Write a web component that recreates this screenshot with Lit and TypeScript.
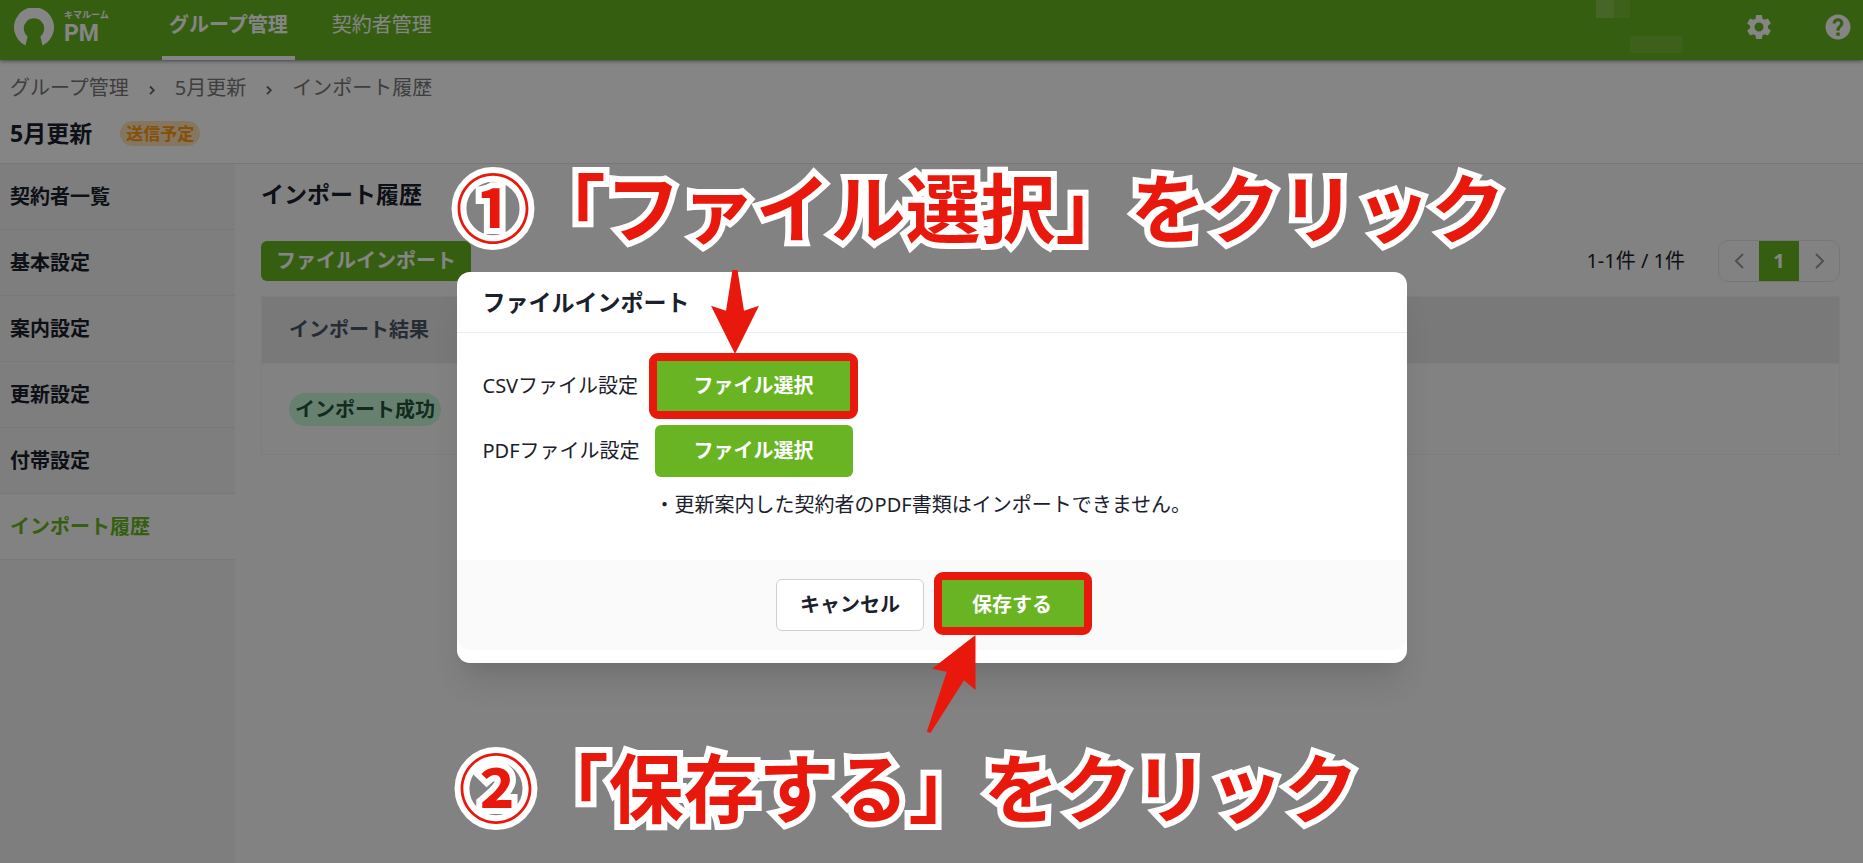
import { LitElement, html, css, svg } from "lit";
import { customElement, state } from "lit/decorators.js";

const MENU = ["契約者一覧", "基本設定", "案内設定", "更新設定", "付帯設定", "インポート履歴"];
const CRUMBS = ["グループ管理", "5月更新", "インポート履歴"];

const chevron = svg`<svg class="crumb-sep" viewBox="0 0 8 30" aria-hidden="true"><path d="M2 13.5l3.8 3.8L2 21.1" fill="none" stroke="currentColor" stroke-width="1.8"/></svg>`;

@customElement("app-header")
class AppHeader extends LitElement {
  static styles = css`
    :host {
      display: flex;
      height: 60px;
      background: #69b422;
      color: #fff;
      box-shadow: 0 1px 4px rgba(0, 0, 0, 0.5);
      position: relative;
    }
    .logo { display: flex; align-items: center; gap: 10px; width: 162px; padding: 0 0 6px 14px; box-sizing: border-box; }
    .mark { width: 40px; height: 38px; }
    .brand { display: flex; flex-direction: column; gap: 1px; font-weight: 700; }
    .kana { font-size: 9px; line-height: 13px; }
    .pm { font-family: Roboto, sans-serif; font-size: 23px; line-height: 24px; }
    nav { display: flex; gap: 30px; flex: 1; }
    .tab {
      padding: 0 7px 6px;
      border-bottom: 4px solid transparent;
      display: flex;
      align-items: center;
      font-size: 20px;
      line-height: 30px;
      color: inherit;
      text-decoration: none;
    }
    .tab.active { font-weight: 700; border-color: #fff; }
    .user { width: 87px; height: 54px; }
    .tools { display: flex; align-items: center; gap: 49px; padding: 0 10px 6px 61px; }
    .icon-btn { border: 0; padding: 0; background: none; color: inherit; width: 30px; height: 30px; }
    .icon-btn svg { display: block; width: 30px; height: 30px; fill: currentColor; }
  `;
  render() {
    return html`
      <div class="logo">
        <svg class="mark" viewBox="0 0 40 38" aria-hidden="true">
          <path fill="#fff" d="M11.5 37.4A20 20 0 1 1 28.5 37.4L26.4 28.5A10.2 10.2 0 1 0 13.6 28.5Z" />
        </svg>
        <div class="brand"><span class="kana">キマルーム</span><span class="pm">PM</span></div>
      </div>
      <nav>
        <a class="tab active" href="#groups">グループ管理</a>
        <a class="tab" href="#contractors">契約者管理</a>
      </nav>
      <svg class="user" viewBox="0 0 87 54" aria-hidden="true">
        <path fill="#fff" fill-opacity=".2" d="M0 0h18v18H0z" />
        <path fill="#fff" fill-opacity=".09" d="M18 0h16v18H18zM34 36h53v17H34z" />
      </svg>
      <div class="tools">
        <button class="icon-btn" aria-label="設定">
          <svg viewBox="0 0 24 24"><path d="M19.14 12.94c.04-.3.06-.61.06-.94 0-.32-.02-.64-.07-.94l2.03-1.58a.49.49 0 0 0 .12-.61l-1.92-3.32a.49.49 0 0 0-.59-.22l-2.39.96c-.5-.38-1.03-.7-1.62-.94l-.36-2.54a.48.48 0 0 0-.48-.41h-3.84a.47.47 0 0 0-.47.41l-.36 2.54c-.59.24-1.13.57-1.62.94l-2.39-.96a.48.48 0 0 0-.59.22L2.74 8.87a.47.47 0 0 0 .12.61l2.03 1.58c-.05.3-.09.63-.09.94s.02.64.07.94l-2.03 1.58a.49.49 0 0 0-.12.61l1.92 3.32c.12.22.37.29.59.22l2.39-.96c.5.38 1.03.7 1.62.94l.36 2.54c.05.24.24.41.48.41h3.84c.24 0 .44-.17.47-.41l.36-2.54c.59-.24 1.13-.56 1.62-.94l2.39.96c.22.08.47 0 .59-.22l1.92-3.32a.47.47 0 0 0-.12-.61zM12 15.6A3.6 3.6 0 1 1 12 8.4a3.6 3.6 0 0 1 0 7.2z" /></svg>
        </button>
        <button class="icon-btn" aria-label="ヘルプ">
          <svg viewBox="0 0 24 24"><path d="M12 2C6.480 2 2 6.480 2 12s4.480 10 10 10 10-4.480 10-10S17.520 2 12 2zm1.400 17h-2.800v-2.700h2.800V19zm1.900-7.500l-.9.920C13.670 13.150 13.300 13.800 13.300 15h-2.600v-.5c0-1.100.45-2.100 1.170-2.830l1.240-1.260c.37-.36.59-.86.59-1.410 0-1.100-.7-1.700-1.700-1.700s-1.800.7-1.800 1.900H7.700C7.700 6.700 9.600 5 12 5s4.300 1.700 4.300 4c0 .9-.4 1.800-1 2.500z" /></svg>
        </button>
      </div>
    `;
  }
}

@customElement("import-dialog")
class ImportDialog extends LitElement {
  static styles = css`
    :host {
      display: block;
      position: relative;
      box-sizing: border-box;
      width: 950px;
      padding-bottom: 13px;
      background: #fff;
      border-radius: 13px;
      color: #1a202c;
      font-size: 20px;
      line-height: 30px;
      box-shadow: 0 25px 31px -6px rgba(0, 0, 0, 0.1), 0 12px 12px -6px rgba(0, 0, 0, 0.04);
    }
    h2 { margin: 0; padding: 15px 26px; font-size: 23px; line-height: 30px; border-bottom: 1px solid #e9edf2; }
    .body { display: grid; grid-template-columns: max-content 1fr; gap: 13px 15px; align-items: center; padding: 27px 26px 40px; }
    .note { grid-column: 2; margin: 0; }
    .btn {
      font: inherit;
      font-weight: 700;
      height: 52px;
      border-radius: 6px;
      border: 0;
      background: #69b422;
      color: #fff;
      display: block;
    }
    .pick { padding: 0 39px; }
    .save { padding: 0 35px; }
    .cancel { padding: 0 23px; background: #fff; color: #1a202c; border: 1px solid #cfcfcf; }
    .footer { display: flex; justify-content: center; gap: 13px; padding: 19px 26px; background: #fafafa; border-radius: 0 0 13px 13px; }
    .target { position: relative; width: max-content; }
    .ring { position: absolute; inset: -7px -5px -7px -6px; border: 8px solid #e8190c; border-radius: 9px; pointer-events: none; }
    .ring.tight { inset: -7px -5px -4px -3px; }
    .arrow { position: absolute; fill: #e8190c; pointer-events: none; }
    .arrow.down { left: 254px; top: -2px; width: 48px; height: 84px; }
    .arrow.up { left: 469px; top: 363px; width: 50px; height: 99px; }
    .caption {
      position: absolute;
      margin: 0;
      white-space: nowrap;
      font-size: 75px;
      line-height: 90px;
      font-weight: 700;
      font-family: "Noto Sans CJK JP", sans-serif;
      color: #e8190c;
      -webkit-text-stroke: 12px #fff;
      paint-order: stroke fill;
      stroke-linejoin: round;
      pointer-events: none;
    }
    .caption.first { left: -1px; top: -112px; }
    .caption.second { left: 2px; top: 468px; }
  `;
  render() {
    return html`
      <section role="dialog" aria-labelledby="title">
        <h2 id="title">ファイルインポート</h2>
        <div class="body">
          <label for="csv">CSVファイル設定</label>
          <div class="target"><button class="btn pick" id="csv">ファイル選択</button><span class="ring"></span></div>
          <label for="pdf">PDFファイル設定</label>
          <div class="target"><button class="btn pick" id="pdf">ファイル選択</button></div>
          <p class="note">・更新案内した契約者のPDF書類はインポートできません。</p>
        </div>
        <div class="footer">
          <button class="btn cancel">キャンセル</button>
          <div class="target"><button class="btn save">保存する</button><span class="ring tight"></span></div>
        </div>
      </section>
      <svg class="arrow down" viewBox="0 0 48 84" aria-hidden="true"><path d="M21.5 0h5l6.500 40.700 15-5L24 84 0 35.700l15 5z" /></svg>
      <svg class="arrow up" viewBox="0 0 50 99" aria-hidden="true"><path d="M49.500 0v55l-11.500-9.700L4.500 98 .8 96.700 20.800 36.700 6 33.700z" /></svg>
      <p class="caption first">①「ファイル選択」をクリック</p>
      <p class="caption second">②「保存する」をクリック</p>
    `;
  }
}

@customElement("app-root")
class AppRoot extends LitElement {
  @state() private current = MENU.length - 1;

  static styles = css`
    :host {
      display: flex;
      flex-direction: column;
      position: relative;
      min-height: 100vh;
      overflow: hidden;
      background: #fafafa;
      color: #1a202c;
      font-family: "Noto Sans", "Noto Sans CJK JP", sans-serif;
      font-size: 20px;
      line-height: 30px;
    }
    .top { background: #fff; border-bottom: 1px solid #e2e2e2; padding: 13px 10px 15px; display: grid; gap: 15px; }
    .crumbs { display: flex; gap: 19px; }
    .crumbs a { color: #777; text-decoration: none; }
    .crumb-sep { width: 8px; height: 30px; color: #666; }
    .title { display: flex; align-items: center; gap: 28px; }
    h1, h2 { margin: 0; font-size: 23px; line-height: 30px; }
    .status { font-size: 17px; line-height: 25px; font-weight: 700; padding: 0 6px; border-radius: 13px; background: #ffe2bd; color: #ff9a0a; }
    .columns { display: flex; flex: 1; }
    aside { width: 235px; background: #f2f2f2; }
    .item { display: block; padding: 18px 10px 17px; border-bottom: 1px solid #e6e6e6; font-weight: 700; color: inherit; text-decoration: none; }
    .item.active { background: #fafafa; color: #69b422; }
    main { flex: 1; padding: 15px 23px 0 26px; }
    .actions { display: flex; justify-content: space-between; align-items: center; margin: 31px 0 14px; }
    .import { height: 40px; padding: 0 15px; border: 0; border-radius: 6px; background: #69b422; color: #fff; font: inherit; font-weight: 700; line-height: 40px; }
    .paging { display: flex; align-items: center; gap: 33px; }
    .pager { display: flex; border: 1px solid #e2e2e2; border-radius: 10px; overflow: hidden; }
    .page { width: 40px; height: 40px; padding: 0; border: 0; background: none; color: #999; font: inherit; display: grid; place-items: center; }
    .page.on { background: #69b422; color: #fff; font-weight: 700; }
    .page svg { width: 10px; height: 16px; fill: none; stroke: currentColor; stroke-width: 2; }
    table { width: 100%; border-collapse: collapse; border: 1px solid #f0f0f0; }
    th, td { text-align: left; padding: 0 27px; border-bottom: 1px solid #f0f0f0; }
    th { height: 66px; background: #e8e8e8; color: #4a5568; }
    td { height: 90px; }
    .badge { display: inline-block; padding: 0 6px; line-height: 33px; border-radius: 17px; background: #c6f6d5; color: #22543d; font-weight: 700; }
    .overlay { position: absolute; inset: 0; background: rgba(0, 0, 0, 0.48); display: flex; justify-content: center; align-items: flex-start; padding-top: 272px; }
  `;

  render() {
    return html`
      <app-header></app-header>
      <div class="top">
        <div class="crumbs">
          ${CRUMBS.map((c, i) => html`${i ? chevron : ""}<a href="#crumb${i}">${c}</a>`)}
        </div>
        <div class="title"><h1>5月更新</h1><span class="status">送信予定</span></div>
      </div>
      <div class="columns">
        <aside>
          ${MENU.map((m, i) => html`<a class="item ${i === this.current ? "active" : ""}" href="#menu${i}">${m}</a>`)}
        </aside>
        <main>
          <h2>インポート履歴</h2>
          <div class="actions">
            <button class="import">ファイルインポート</button>
            <div class="paging">
              <span>1-1件 / 1件</span>
              <div class="pager">
                <button class="page" aria-label="前へ"><svg viewBox="0 0 10 16"><path d="M9 1L2 8l7 7" /></svg></button>
                <button class="page on">1</button>
                <button class="page" aria-label="次へ"><svg viewBox="0 0 10 16"><path d="M2 1l7 7-7 7" /></svg></button>
              </div>
            </div>
          </div>
          <table>
            <thead><tr><th>インポート結果</th></tr></thead>
            <tbody><tr><td><span class="badge">インポート成功</span></td></tr></tbody>
          </table>
        </main>
      </div>
      <div class="overlay"><import-dialog></import-dialog></div>
    `;
  }
}
